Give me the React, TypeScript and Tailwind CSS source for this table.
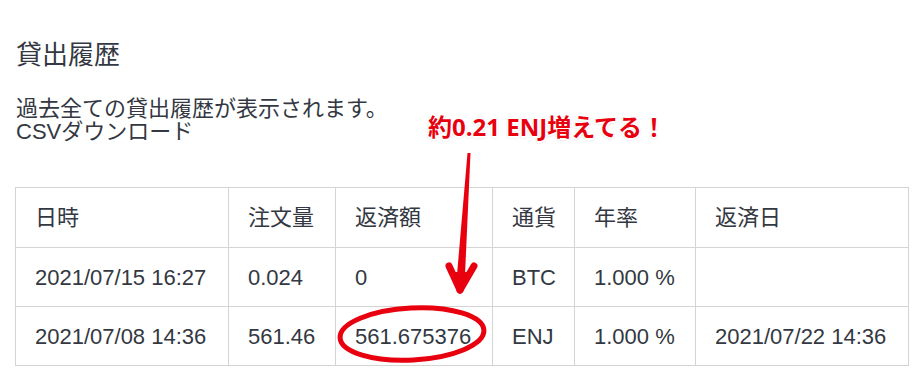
import React from "react";

const rows = [
  ["2021/07/15 16:27", "0.024", "0", "BTC", "1.000 %", ""],
  ["2021/07/08 14:36", "561.46", "561.675376", "ENJ", "1.000 %", "2021/07/22 14:36"],
];

const headers = ["日時", "注文量", "返済額", "通貨", "年率", "返済日"];
const widths = ["w-[213px]", "w-[107px]", "w-[157px]", "w-[82px]", "w-[121px]", "w-[213px]"];

export default function App() {
  return (
    <div className="relative w-[916px] h-[380px] bg-white text-[#333842] font-['Liberation_Sans','Noto_Sans_CJK_JP',sans-serif] overflow-hidden">
      <div className="pl-[16px] pt-[36px]">
        <h2 className="text-[26px] leading-[38px] font-normal">貸出履歴</h2>
        <div className="mt-[23px] text-[22px] leading-[23px]">
          <p>過去全ての貸出履歴が表示されます。</p>
          <p>CSVダウンロード</p>
        </div>
      </div>

      <table className="ml-[15px] mt-[44px] w-[893px] table-fixed border-collapse text-[22px]">
        <thead>
          <tr className="h-[60px]">
            {headers.map((h, i) => (
              <th
                key={h}
                className={`${widths[i]} border border-[#d4d4d4] px-[19px] text-left font-normal whitespace-nowrap`}
              >
                {h}
              </th>
            ))}
          </tr>
        </thead>
        <tbody>
          {rows.map((r) => (
            <tr key={r[0]} className="h-[59px]">
              {r.map((c, i) => (
                <td key={i} className="border border-[#d4d4d4] px-[19px] whitespace-nowrap">
                  {c}
                </td>
              ))}
            </tr>
          ))}
        </tbody>
      </table>

      {/* annotation */}
      <div className="absolute left-[428px] top-[112px] text-[24px] leading-[30px] font-bold text-[#e8000f] font-['Open_Sans','Noto_Sans_CJK_JP',sans-serif] [text-shadow:1.5px_0_0_#fff,-1.5px_0_0_#fff,0_1.5px_0_#fff,0_-1.5px_0_#fff,1px_1px_0_#fff,-1px_-1px_0_#fff,1px_-1px_0_#fff,-1px_1px_0_#fff,0_1px_3px_rgba(0,0,0,0.35)]">
        約0.21 ENJ増えてる！
      </div>
      <svg className="absolute left-0 top-0 pointer-events-none" width="916" height="380" viewBox="0 0 916 380">
        <polygon points="467.5,153 470.5,153 465,275 457,275" fill="#e8000f" />
        <line x1="460" y1="290" x2="449" y2="266" stroke="#e8000f" strokeWidth="7" strokeLinecap="round" />
        <line x1="460" y1="290" x2="474" y2="266" stroke="#e8000f" strokeWidth="7" strokeLinecap="round" />
        <polygon points="452,272 471,272 460,289" fill="#e8000f" />
        <ellipse
          cx="412"
          cy="334"
          rx="72"
          ry="26"
          fill="none"
          stroke="#e8000f"
          strokeWidth="5"
          transform="rotate(-3 412 334)"
        />
      </svg>
    </div>
  );
}
